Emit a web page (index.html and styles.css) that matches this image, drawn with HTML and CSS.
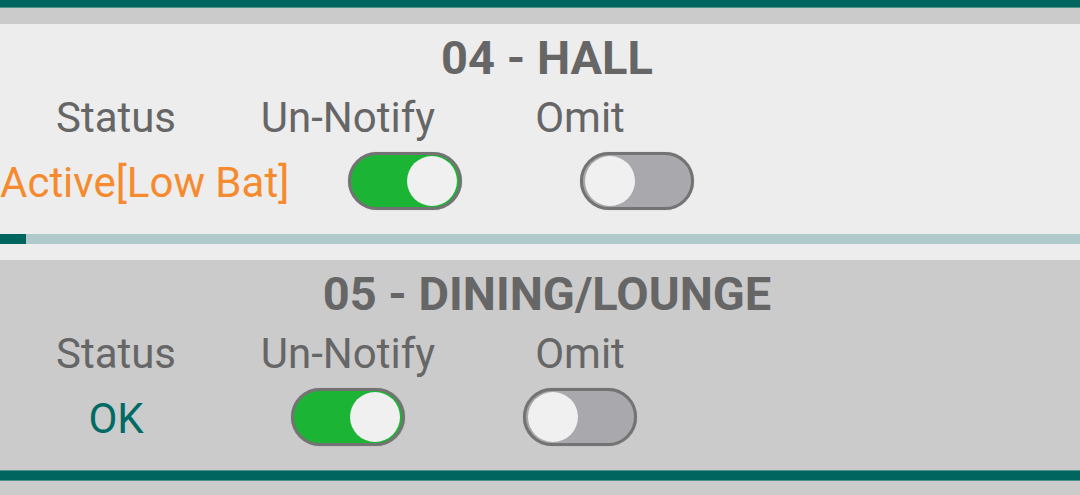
FILE: index.html
```html
<!DOCTYPE html>
<html lang="en">
<head>
    <meta charset="UTF-8">
    <meta name="viewport" content="width=device-width, initial-scale=1.0">
    <title>Zones</title>
    <link rel="stylesheet" href="styles.css">
</head>
<body>
    <div class="zone-list">
        <!-- tail of the zone scrolled above -->
        <div class="zone-tail">
            <div class="bar bar-full bar-cut"></div>
        </div>

        <div class="zone zone-light">
            <h2 class="zone-title">04 - HALL</h2>
            <div class="row labels">
                <div class="cell">Status</div>
                <div class="cell">Un-Notify</div>
                <div class="cell">Omit</div>
            </div>
            <div class="row values">
                <div class="cell"><span class="status status-warn">Active[Low Bat]</span></div>
                <div class="cell"><div class="toggle on"><span class="knob"></span></div></div>
                <div class="cell"><div class="toggle"><span class="knob"></span></div></div>
            </div>
            <div class="bar"><div class="bar-fill" style="width: 26px"></div></div>
        </div>

        <div class="zone zone-dark">
            <h2 class="zone-title">05 - DINING/LOUNGE</h2>
            <div class="row labels">
                <div class="cell">Status</div>
                <div class="cell">Un-Notify</div>
                <div class="cell">Omit</div>
            </div>
            <div class="row values">
                <div class="cell"><span class="status status-ok">OK</span></div>
                <div class="cell"><div class="toggle on"><span class="knob"></span></div></div>
                <div class="cell"><div class="toggle"><span class="knob"></span></div></div>
            </div>
            <div class="bar bar-full"></div>
        </div>

        <div class="zone-next"></div>
    </div>
</body>
</html>
```

FILE: styles.css
```css
body {
    font-family: Roboto, 'Noto Sans', Arial, sans-serif;
    margin: 0;
    padding: 0;
    width: 1080px;
    height: 495px;
    overflow: hidden;
    background-color: #ededed;
}
.zone-list {
    display: flex;
    flex-direction: column;
}
.zone-tail {
    background-color: #cbcbcb;
    padding-bottom: 16px;
}
.zone {
    padding-top: 6px;
}
.zone-light {
    background-color: #ededed;
    padding-bottom: 16px;
}
.zone-dark {
    background-color: #cbcbcb;
    padding-bottom: 14px;
}
.zone-title {
    margin: 0;
    padding-left: 14px;
    text-align: center;
    font-size: 47px;
    line-height: 55px;
    font-weight: 700;
    color: #666666;
}
.row {
    display: flex;
}
.cell {
    flex: none;
    min-width: 232px;
    display: flex;
    justify-content: center;
    align-items: center;
}
.labels {
    margin-top: 8px;
    font-size: 42px;
    line-height: 49px;
    color: #666666;
}
.values {
    margin-top: 10px;
    height: 58px;
}
.status {
    font-size: 42px;
    line-height: 49px;
    padding-top: 3px;
    white-space: nowrap;
}
.status-warn {
    color: #f58a2e; /* Orange */
}
.status-ok {
    color: #006a64; /* Teal */
}
.toggle {
    width: 114px;
    height: 58px;
    box-sizing: border-box;
    border: 3px solid #737373;
    border-radius: 29px;
    background-color: #a9a9ad;
    padding: 0 2px;
    display: flex;
    align-items: center;
    justify-content: flex-start;
    box-shadow: 0 0 1px rgba(0, 0, 0, 0.35);
}
.toggle.on {
    background-color: #1cb434; /* Green */
    justify-content: flex-end;
}
.knob {
    width: 50px;
    height: 50px;
    border-radius: 50%;
    background-color: #f0f0f0;
}
.bar {
    margin-top: 24px;
    height: 10px;
    background-color: #b0c9ca;
    display: flex;
}
.bar-fill {
    height: 100%;
    background-color: #01655f;
}
.bar-full {
    background-color: #01655f;
    border-top: 1px solid #4f918d;
    border-bottom: 1px solid #4f918d;
    height: 9px;
    box-sizing: content-box;
}
.bar-cut {
    margin-top: 0;
    border-top: none;
    height: 7px;
}
.zone-next {
    height: 2px;
    background-color: #b3dcdc;
}
```
